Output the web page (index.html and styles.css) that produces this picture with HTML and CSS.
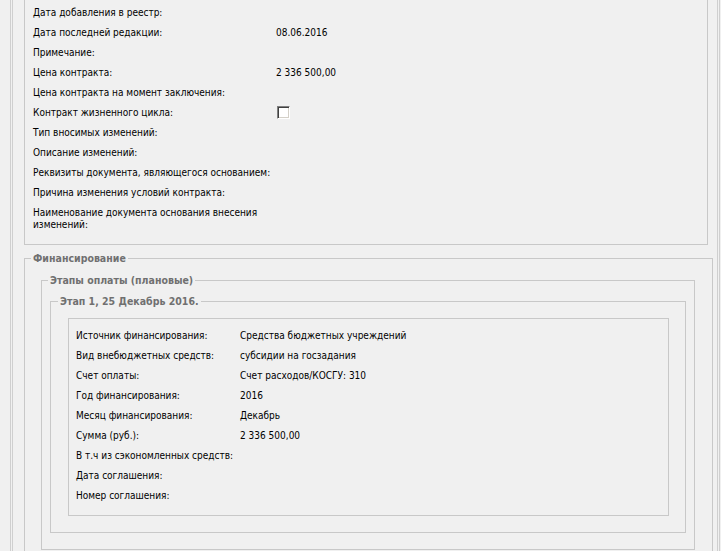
FILE: index.html
```html
<!DOCTYPE html>
<html lang="ru">
  <head>
    <meta charset="UTF-8" />
    <title>Контракт</title>
    <link rel="stylesheet" href="styles.css">
  </head>
  <body>
    <div class="page">
      <fieldset class="group group-main">
        <div class="row"><span class="label">Дата добавления в реестр:</span><span class="value"></span></div>
        <div class="row"><span class="label">Дата последней редакции:</span><span class="value">08.06.2016</span></div>
        <div class="row"><span class="label">Примечание:</span><span class="value"></span></div>
        <div class="row"><span class="label">Цена контракта:</span><span class="value">2 336 500,00</span></div>
        <div class="row"><span class="label">Цена контракта на момент заключения:</span><span class="value"></span></div>
        <div class="row"><span class="label">Контракт жизненного цикла:</span><span class="value value-check"><span class="checkbox"></span></span></div>
        <div class="row"><span class="label">Тип вносимых изменений:</span><span class="value"></span></div>
        <div class="row"><span class="label">Описание изменений:</span><span class="value"></span></div>
        <div class="row"><span class="label">Реквизиты документа, являющегося основанием:</span><span class="value"></span></div>
        <div class="row"><span class="label">Причина изменения условий контракта:</span><span class="value"></span></div>
        <div class="row"><span class="label">Наименование документа основания внесения изменений:</span><span class="value"></span></div>
      </fieldset>

      <fieldset class="group group-finance">
        <legend>Финансирование</legend>
        <fieldset class="group group-stages">
          <legend>Этапы оплаты (плановые)</legend>
          <fieldset class="group group-stage">
            <legend>Этап 1, 25 Декабрь 2016.</legend>
            <div class="stage-box">
              <div class="row"><span class="label">Источник финансирования:</span><span class="value">Средства бюджетных учреждений</span></div>
              <div class="row"><span class="label">Вид внебюджетных средств:</span><span class="value">субсидии на госзадания</span></div>
              <div class="row"><span class="label">Счет оплаты:</span><span class="value">Счет расходов/КОСГУ: 310</span></div>
              <div class="row"><span class="label">Год финансирования:</span><span class="value">2016</span></div>
              <div class="row"><span class="label">Месяц финансирования:</span><span class="value">Декабрь</span></div>
              <div class="row"><span class="label">Сумма (руб.):</span><span class="value">2 336 500,00</span></div>
              <div class="row"><span class="label nowrap">В т.ч из сэкономленных средств:</span><span class="value"></span></div>
              <div class="row"><span class="label">Дата соглашения:</span><span class="value"></span></div>
              <div class="row"><span class="label">Номер соглашения:</span><span class="value"></span></div>
            </div>
          </fieldset>
        </fieldset>
      </fieldset>
    </div>
  </body>
</html>
```

FILE: styles.css
```css
body {
  margin: 0;
  background-color: #f0f0f0;
  font-family: "DejaVu Sans", sans-serif;
  font-stretch: condensed;
  font-size: 10px;
  color: #000;
}

.page {
  margin-left: 10px;
  min-height: 551px;
  padding: 0 9px 0 11px;
  box-sizing: border-box;
  width: 710px;
  border-left: 3px double #cfcfcf;
  border-right: 3px double #cfcfcf;
}

.group {
  margin: 0;
  min-width: 0;
  border: 1px solid #c8c8c8;
}

.group legend {
  padding: 0 2px;
  line-height: 13px;
  font-size: 10.5px;
  font-weight: bold;
  color: #707070;
}

/* top block, its upper edge is scrolled away */
.group-main {
  border-top: none;
  padding: 3px 8px 9px 8px;
}

.group-finance {
  margin-top: 7px;
  margin-right: -5px;
  padding: 9px 6px 20px 6px;
}

.group-stages {
  margin: 0 11px 0 10px;
  padding: 8px 6px 16px 6px;
}

.group-stage {
  margin: 0 2px;
  padding: 10px 7px 16px 7px;
}

.stage-box {
  margin: 0 9px 0 10px;
  padding: 7px 7px 9px 7px;
  border: 1px solid #c8c8c8;
}

.row {
  display: grid;
  grid-template-columns: 243px 1fr;
  align-items: center;
  padding: 4px 0;
  line-height: 12px;
}

.stage-box .row {
  grid-template-columns: 164px 1fr;
}

.nowrap {
  white-space: nowrap;
}

.value-check {
  align-self: start;
  height: 12px;
}

.checkbox {
  display: block;
  width: 11px;
  height: 11px;
  margin: -1px 0 0 1px;
  background-color: #fff;
  border: 1px solid;
  border-color: #808080 #fff #fff #808080;
  box-shadow: inset 1px 1px 0 #404040, inset -1px -1px 0 #d4d0c8;
}
```
